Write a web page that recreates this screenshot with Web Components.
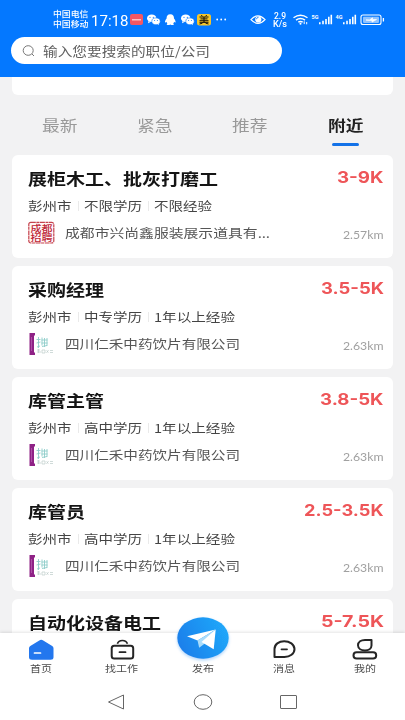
<!DOCTYPE html>
<html lang="zh-CN">
<head>
<meta charset="utf-8">
<title>附近职位</title>
<style>
html,body{margin:0;height:100%;overflow:hidden}
body{font-family:"Noto Sans CJK SC",sans-serif;background:#f2f2f3}
</style>
</head>
<body>
<job-app></job-app>
<script>
const make = (name, html, init) => customElements.define(name, class extends HTMLElement {
  connectedCallback() {
    if (this.shadowRoot) return;
    const t = document.createElement('template');
    t.innerHTML = typeof html === 'function' ? html(this) : html;
    this.attachShadow({mode: 'open'}).append(t.content.cloneNode(true));
    if (init) init(this);
  }
});

/* Text stretched horizontally to the width given in "w". */
make('fit-text', `<style>
:host{display:inline-block;white-space:nowrap;flex:none}
span{display:inline-block;transform-origin:0 50%}
</style><span><slot></slot></span>`, el => {
  const w = +el.getAttribute('w'), s = el.shadowRoot.querySelector('span');
  el.style.width = w + 'px';
  s.style.transform = `scaleX(${w / s.getBoundingClientRect().width})`;
});

make('status-bar', `<style>
:host{display:flex;height:37px;color:#fff;box-sizing:border-box;padding:9px 18px 0 53px}
.op{display:flex;flex-direction:column;font-size:7.500px;line-height:10px;width:36px;font-weight:500}
.clock{font:15px/22px Roboto,sans-serif;width:39px;margin-left:2px;padding-top:1px}
svg{flex:none;display:block}
.rate{font:500 8.500px/8px Roboto,sans-serif;display:flex;flex-direction:column;width:14px;padding-top:3px;align-items:center}
</style>
<div class="op"><fit-text w="35.500">中国电信</fit-text><fit-text w="35.500">中国移动</fit-text></div>
<div class="clock"><fit-text w="37.500">17:18</fit-text></div>
<svg width="100" height="22" viewBox="130 9 100 22">
<rect x="132" y="14" width="13" height="11" rx="2" fill="#f45763"/><path d="M134 19.8h9" stroke="#ffd0d2" stroke-width="1.3"/>
<g id="wx"><ellipse cx="153.700" cy="18.300" rx="4.700" ry="3.800" fill="#fff"/><path d="M150.500 21l-.5 2.200 2.500-1.300z" fill="#fff"/><ellipse cx="158" cy="21.300" rx="4.200" ry="3.400" fill="#fff" stroke="#0878fd" stroke-width=".6"/><path d="M160 24l.8 1.300.2-2z" fill="#fff"/><g fill="#0878fd"><circle cx="152" cy="17.300" r=".6"/><circle cx="155.300" cy="17.300" r=".6"/><circle cx="156.600" cy="20.500" r=".5"/><circle cx="159.400" cy="20.500" r=".5"/></g></g>
<path d="M172.300 14.300c-2.700 0-3.800 1.800-3.700 4.200-1.200 1.400-1.900 3-1.500 4 .5.400 1-.3 1.300-.7.200.8.600 1.300 1 1.700-.8.400-1.100 1.400.2 1.500 1 .1 2-.1 2.700-.5.700.4 1.700.6 2.700.5 1.300-.1 1-1.100.2-1.500.4-.4.800-.9 1-1.700.3.400.8 1.100 1.300.7.400-1-.3-2.600-1.500-4 .1-2.400-1-4.200-3.700-4.200z" fill="#fff"/>
<use href="#wx" x="34"/>
<rect x="199" y="14" width="14" height="11.500" rx="2.500" fill="#f5c62c"/>
<path d="M203.300 15l1 1.300M208.700 15l-1 1.300M201.500 17h9M202.500 18.900h7M201.500 20.700h9M206 17v4.500M206 21.500q-1 2-4.500 2.500M206 21.500q1 2 4.500 2.500M201.500 22.300h9" stroke="#17120a" fill="none"/>
<g fill="#fff"><circle cx="219.200" cy="19.500" r=".9"/><circle cx="223.200" cy="19.500" r=".9"/><circle cx="227.200" cy="19.500" r=".9"/></g>
</svg>
<svg width="45" height="22" viewBox="230 9 45 22"><path d="M253 19.600q7-7.600 14 0q-7 7.600-14 0z" fill="none" stroke="#fff" stroke-width="1.300"/><circle cx="260.300" cy="19.500" r="3.100" fill="#fff"/><path d="M258.300 19.300q.4-2 2.200-1.900" stroke="#0878fd" fill="none" stroke-width=".8"/></svg>
<div class="rate"><fit-text w="12">2.9</fit-text><fit-text w="14">K/s</fit-text></div>
<svg width="101" height="22" viewBox="289 9 101 22" fill="none" stroke="#fff">
<path d="M295.500 17.800q7-5.200 14 0M298 20.100q4.500-3.200 9 0M300.300 22.200q2.200-1.500 4.400 0" stroke-width="1.400"/><circle cx="302.500" cy="23.700" r="1" fill="#fff" stroke="none"/><path d="M306.200 21.300v2.800M308.700 22v2.300" stroke-width="1"/>
<g id="bars" stroke-width="1.600"><path d="M321.800 24.300v-2M325 24.300v-3.500M328 24.300v-5.300M330.800 24.300v-7.500M333.300 24.300v-9.500"/></g><use href="#bars" x="24"/>
<g fill="#fff" stroke="none" font-family="Roboto" font-weight="700" font-size="5.500"><text x="313.500" y="18.500">5G</text><text x="337.500" y="18.500">4G</text></g>
<rect x="363" y="15" width="20" height="9.500" rx="2" stroke-width="1.100"/><rect x="365" y="16.700" width="16" height="6.200" rx=".8" fill="#8fc2ff" stroke="none"/><path d="M368 20h3.500l3-2.200v1.700h4l-4.500 2.600v-1.600z" fill="#fff" stroke="#fff" stroke-width=".7"/><path d="M385.400 18v3.500" stroke-width="1.300"/>
</svg>`);

make('search-box', `<style>
:host{display:flex;align-items:center;box-sizing:border-box;width:270.500px;height:27px;margin-left:11px;border-radius:13.500px;background:#fff;color:#5f5f5f;padding-left:10.500px;font-size:12.700px}
svg{margin-right:8px;flex:none}
</style>
<svg width="13" height="14" viewBox="0 0 13 14" fill="none" stroke="#777" stroke-width="1"><ellipse cx="6.200" cy="6.500" rx="5" ry="4.800"/><path d="M10 10l2 2"/></svg>
<fit-text w="167"><slot></slot></fit-text>`);

make('job-tab', `<style>
:host{display:flex;flex-direction:column;align-items:center;width:95.300px;color:#999;font-size:14.700px;line-height:22px}
:host([active]){color:#222;font-weight:700}
i{height:2.600px;width:27px;border-radius:2px;margin-top:7.700px}
:host([active]) i{background:#1372e8}
</style><fit-text w="35.500"><slot></slot></fit-text><i></i>`);

make('job-card', el => { const a = n => el.getAttribute(n); return `<style>
:host{display:block;box-sizing:border-box;height:103px;border-radius:6px;background:#fff;padding:11px 9.500px 0 16px}
.r{display:flex;justify-content:space-between;align-items:center}
.t{height:24px;font-size:16.200px;line-height:24px;font-weight:700;color:#151515}
.p{font-family:Inter,sans-serif;font-size:15.700px;color:#ee5558;padding-top:1px}
.m{height:18px;margin-top:7px;line-height:18px;font-size:12.300px;color:#444;justify-content:flex-start}
.m b{width:1px;height:10px;background:#eaeaea;margin:0 5px 0 6px}
.c{height:24px;margin-top:6.500px;font-size:12.500px;line-height:24px;color:#555}
.c div{display:flex;align-items:center}
.c svg{margin-right:9.500px;flex:none}
.d{font:10.500px/24px Lato,sans-serif;color:#a0a0a0;padding-top:4px}
</style>
<div class="r t"><fit-text w="${a('tw')}">${a('name')}</fit-text><fit-text class="p" w="${a('pw')}">${a('pay')}</fit-text></div>
${a('edu') ? `<div class="r m"><fit-text w="43.500">彭州市</fit-text><b></b><fit-text w="58">${a('edu')}</fit-text><b></b><fit-text w="${a('ew')}">${a('exp')}</fit-text></div>
<div class="r c"><div>${a('logo') === 'seal' ? `<svg width="27" height="24" viewBox="0 0 27 24"><rect x=".8" y="1.300" width="25" height="20.700" rx="2" fill="#fff6f6" stroke="#c5434d" stroke-width="1.200" stroke-dasharray="5 .6 3 .5"/><g fill="#bd2636" font-family="Noto Sans CJK SC" font-weight="500" font-size="9"><text x="2.500" y="10.600" textLength="22" lengthAdjust="spacingAndGlyphs">成都</text><text x="2.500" y="20.200" textLength="22" lengthAdjust="spacingAndGlyphs">招聘</text></g></svg>`
: `<svg width="27" height="24" viewBox="0 0 27 24" fill="none"><path d="M1.500 1h5.500v2.500h-1v17h1v2.500h-5.500z" fill="#8f2286"/><path d="M3.500 5v14" stroke="#b35cad" stroke-width=".8"/><path d="M8.500 7.500h4M10.500 5v11M8.500 11l4-1M13.500 8h6M14 5.500v8M16.500 6v9M19 6v8M13.500 11h6M9 15l3-1M14 14.500l5-1" stroke="#8fcdc9" stroke-width=".9"/><path d="M9 18h3M9 20h4M10.500 17v4M14 18h3v3h-3zM18.500 18.500l2 2M20.500 18l-2 3M22 18.500h3M22 20.500h3" stroke="#bccbc8" stroke-width=".7"/></svg>`}
<fit-text w="${a('cw')}">${a('company')}</fit-text></div><fit-text class="d" w="40.500">${a('dist')}</fit-text></div>` : ''}`; });

make('nav-item', el => `<style>
:host{display:flex;flex-direction:column;align-items:center;width:81.300px;font-size:9.300px;line-height:14px;color:#4b4b4b}
</style><slot name="icon"></slot><fit-text w="${el.getAttribute('w')}"><slot></slot></fit-text>`);

make('bottom-bar', `<style>
:host{display:block;height:87.500px;background:#fff;box-shadow:0 -1px 3px #0000001c}
nav{display:flex;justify-content:center;height:47px}
svg{display:block;overflow:visible}
.sys{display:flex;padding:4px 0 0 107px;gap:68.500px;height:40px;align-items:center;box-sizing:border-box}
</style>
<nav>
<nav-item w="22"><svg slot="icon" width="28" height="28" viewBox="26.500 632.500 28 28"><path d="M40.700 639.300q1 0 2 .7l9 5.500q1.300 1 1.300 2.200v9q0 2.500-3 2.500h-18.500q-3 0-3-2.500v-9q0-1.200 1.300-2.200l9-5.500q.9-.7 1.900-.7z" fill="#2377ee"/><path d="M34 652.500h6" stroke="#fff" stroke-width="1.700" stroke-linecap="round"/></svg>首页</nav-item>
<nav-item w="33"><svg slot="icon" width="28" height="28" viewBox="108.300 632.500 28 28" fill="none" stroke="#252525" stroke-width="2"><rect x="112" y="645.300" width="21.500" height="12.700" rx="2.500"/><path d="M117.700 643.300q1-3.300 5-3.300t5 3.300" stroke-width="1.700"/><path d="M119.800 651.700h6" stroke-width="1.800" stroke-linecap="round"/></svg>找工作</nav-item>
<nav-item w="22"><svg slot="icon" width="28" height="28" viewBox="189 632.500 28 28"><defs><linearGradient id="g" x1="0" x2="1" y1=".7" y2=".3"><stop stop-color="#1c7eea"/><stop offset="1" stop-color="#20a8fa"/></linearGradient><filter id="s" x="-20%" y="-20%" width="140%" height="150%"><feDropShadow dx="0" dy="1.500" stdDeviation="1.500" flood-color="#1a80f0" flood-opacity=".35"/></filter></defs><ellipse cx="203" cy="637.500" rx="25.700" ry="20.700" fill="url(#g)" filter="url(#s)"/><path d="M215.700 629L187 635.800l10.500 4.200z" fill="#fff"/><path d="M215.700 629l-18.200 11 1.700 7.300 5.300-4z" fill="#a9dcfb"/><path d="M215.700 629l-14.200 12.500 12.200 7.200z" fill="#fff"/></svg>发布</nav-item>
<nav-item w="22"><svg slot="icon" width="28" height="28" viewBox="270.500 632.500 28 28" fill="none" stroke="#252525" stroke-width="2"><path d="M275 656.500V648.500c0-4.600 4.300-7.800 9.700-7.800s10.300 3.200 10.300 7.900-4.500 7.900-10 7.900z" stroke-linejoin="round"/><path d="M282 648.800h5.500" stroke-width="1.800" stroke-linecap="round"/></svg>消息</nav-item>
<nav-item w="22"><svg slot="icon" width="28" height="28" viewBox="352.500 632.500 28 28" fill="none" stroke="#252525" stroke-width="2"><path d="M373 639.500v5.500c0 3.200-3 5-6.500 5s-7-1.800-7-5.200 3.200-5.300 7-5.300z" stroke-linejoin="round"/><rect x="355" y="651.800" width="22.700" height="6.200" rx="3.100"/></svg>我的</nav-item>
</nav>
<div class="sys"><svg width="18" height="18" viewBox="107 693 18 18" fill="none" stroke="#666"><path d="M123.500 695v14l-15-7z" stroke-linejoin="round"/></svg>
<svg width="18" height="18" viewBox="194 693 18 18" fill="none" stroke="#666"><ellipse cx="203" cy="702" rx="8.800" ry="7.300"/></svg>
<svg width="18" height="18" viewBox="280 693 18 18" fill="none" stroke="#666"><rect x="280.500" y="695.500" width="16" height="13" rx=".5"/></svg></div>`);

make('job-app', `<style>
:host{display:flex;flex-direction:column;width:405px;height:720px;overflow:hidden;background:#f2f2f3}
header{background:#0478ff;height:76.500px;flex:none}
main{flex:1;min-height:0;overflow:hidden;padding:0 12px}
.prev{height:18px;background:#fff;border-radius:0 0 6px 6px}
.tabs{display:flex;height:60px;box-sizing:border-box;padding-top:19px;justify-content:center}
.list{display:flex;flex-direction:column;gap:8px}
bottom-bar{flex:none;position:relative}
</style>
<header><status-bar></status-bar><search-box>输入您要搜索的职位/公司</search-box></header>
<main><div class="prev"></div>
<div class="tabs"><job-tab>最新</job-tab><job-tab>紧急</job-tab><job-tab>推荐</job-tab><job-tab active>附近</job-tab></div>
<div class="list">
<job-card name="展柜木工、批灰打磨工" tw="190" pay="3-9K" pw="46.500" edu="不限学历" exp="不限经验" ew="58" logo="seal" company="成都市兴尚鑫服装展示道具有..." cw="205" dist="2.57km"></job-card>
<job-card name="采购经理" tw="76" pay="3.5-5K" pw="63" edu="中专学历" exp="1年以上经验" ew="81" company="四川仁禾中药饮片有限公司" cw="175" dist="2.63km"></job-card>
<job-card name="库管主管" tw="76" pay="3.8-5K" pw="63.500" edu="高中学历" exp="1年以上经验" ew="81" company="四川仁禾中药饮片有限公司" cw="175" dist="2.63km"></job-card>
<job-card name="库管员" tw="57" pay="2.5-3.5K" pw="79.500" edu="高中学历" exp="1年以上经验" ew="81" company="四川仁禾中药饮片有限公司" cw="175" dist="2.63km"></job-card>
<job-card name="自动化设备电工" tw="133" pay="5-7.5K" pw="63"></job-card>
</div></main>
<bottom-bar></bottom-bar>`);
</script>
</body>
</html>
